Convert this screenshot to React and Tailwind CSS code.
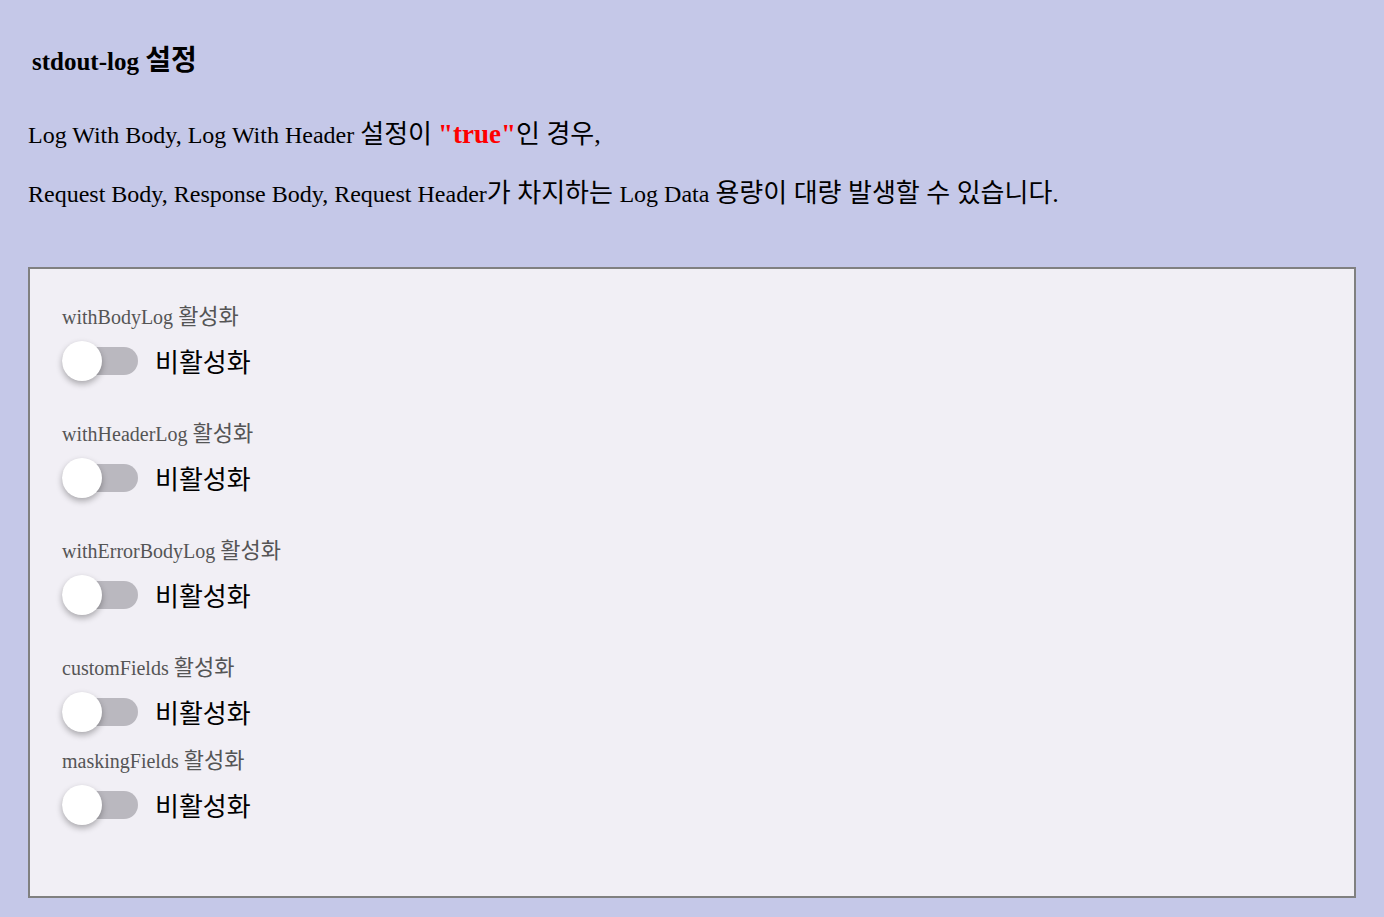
import React, { useState } from "react";

const serif = "font-['Liberation_Serif','Noto_Sans_CJK_KR',serif]";
const sans = "font-['Noto_Sans_CJK_KR','Noto_Sans',sans-serif]";

function Toggle({ label, extra }) {
  const [on, setOn] = useState(false);
  return (
    <div className={extra}>
      <div className={`${serif} h-[20px] text-[20px] leading-[20px] text-[#555]`}>
        {label} <span className="text-[22px] leading-[20px]">활성화</span>
      </div>
      <div className="mt-[14px] flex items-center h-[40px]">
        <button
          onClick={() => setOn(!on)}
          className="relative w-[76px] h-[40px] flex items-center"
        >
          <span className={`block w-[76px] h-[28px] rounded-full ${on ? "bg-[#9fa8da]" : "bg-[#bab8bf]"}`} />
          <span
            className={`absolute top-0 w-[40px] h-[40px] rounded-full bg-white shadow-[0_3px_6px_rgba(0,0,0,0.3)] ${on ? "left-[36px]" : "left-0"}`}
          />
        </button>
        <span className={`${sans} ml-[17px] text-[26px] leading-[30px] text-black`}>{on ? "활성화" : "비활성화"}</span>
      </div>
    </div>
  );
}

export default function App() {
  return (
    <div className="min-h-screen bg-[#c5c8e8] px-[28px] pt-[46px] pb-[21px]">
      <h2 className={`${serif} h-[30px] pl-[4px] text-[25px] leading-[30px] font-bold text-black`}>
        stdout-log <span className="text-[28px] leading-[30px]">설정</span>
      </h2>
      <p className={`${serif} h-[30px] mt-[43px] text-[24px] leading-[30px] text-black`}>
        Log With Body, Log With Header <span className="text-[26px] leading-[30px]">설정이</span>{" "}
        <span className="text-[#ff0000] font-bold text-[27px] leading-[30px]">"true"</span>
        <span className="text-[26px] leading-[30px]">인 경우,</span>
      </p>
      <p className={`${serif} h-[30px] mt-[30px] text-[24px] leading-[30px] text-black`}>
        Request Body, Response Body, Request Header<span className="text-[26px] leading-[30px]">가 차지하는 </span>Log Data{" "}
        <span className="text-[26px] leading-[30px]">용량이 대량 발생할 수 있습니다.</span>
      </p>
      <div className="mt-[58px] border-2 border-[#808080] bg-[#f1eff5] pl-[32px] pt-[38px] pb-[71px]">
        <Toggle label="withBodyLog" extra="mb-[43px]" />
        <Toggle label="withHeaderLog" extra="mb-[43px]" />
        <Toggle label="withErrorBodyLog" extra="mb-[43px]" />
        <Toggle label="customFields" extra="mb-[19px]" />
        <Toggle label="maskingFields" />
      </div>
    </div>
  );
}
